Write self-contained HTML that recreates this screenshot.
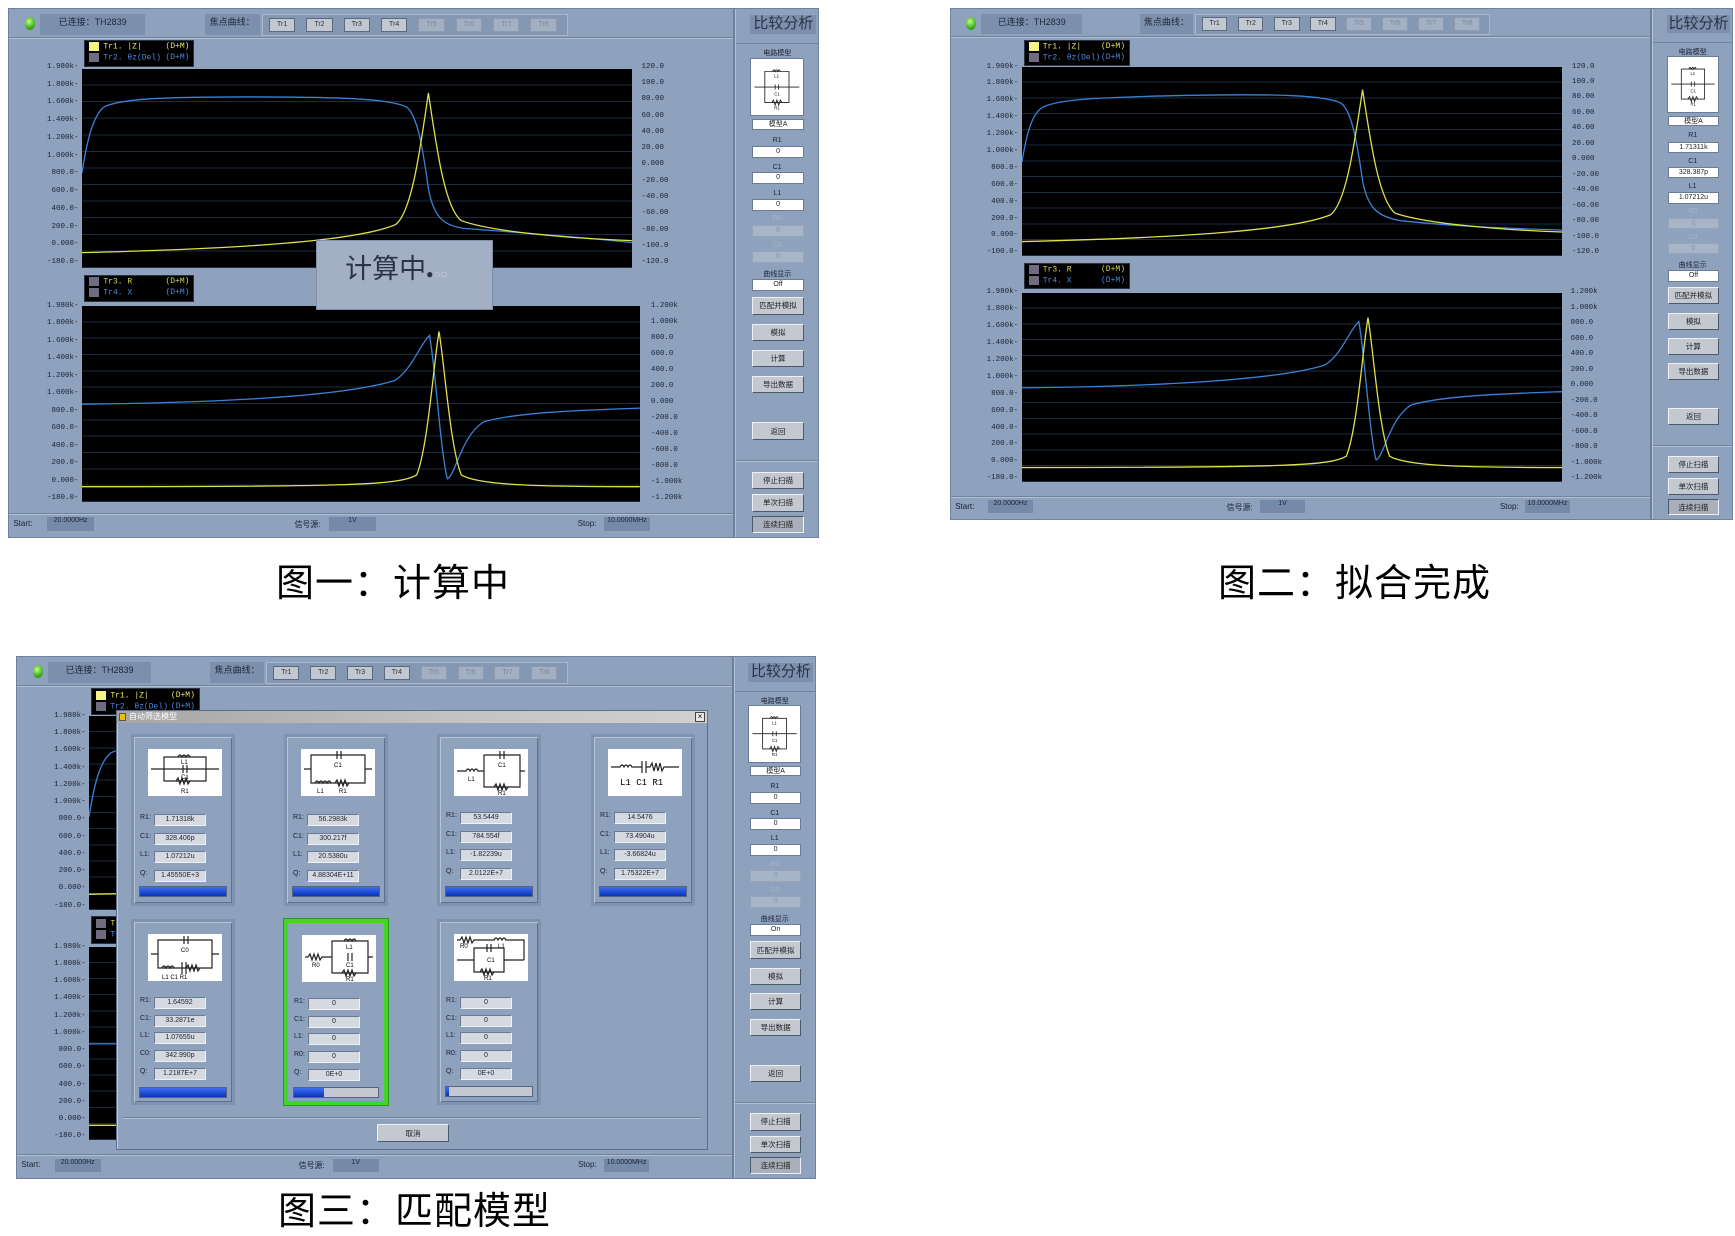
<!DOCTYPE html>
<html><head><meta charset="utf-8">
<style>
*{box-sizing:border-box;margin:0;padding:0}
body{width:1735px;height:1236px;background:#fff;position:relative;overflow:hidden;font-family:"Liberation Sans","Noto Sans CJK SC",sans-serif}
.panel{position:absolute;background:#8ea1bd;border:1px solid #6f819c;overflow:hidden}
.a{position:absolute}
.main{position:absolute;left:0;top:0;width:89.8%;height:100%;border-right:2px solid #6d7f9a}
.side{position:absolute;left:89.8%;right:0;top:0;height:100%;border-left:1px solid #b5c2d6}
.topsep{position:absolute;left:0;width:100%;top:5.3%;height:2px;background:#6f829e;border-bottom:1px solid #b3c0d4}
.botsep{position:absolute;left:0;width:100%;top:95.4%;height:2px;background:#6f829e;border-bottom:1px solid #b3c0d4}
.led{position:absolute;left:2.2%;top:1.6%;width:10px;height:13px;border-radius:50%;background:radial-gradient(circle at 40% 35%,#bfff80,#3cb01c 60%,#2a7a14)}
.dbox{position:absolute;background:#7c8fac;color:#1d2638;font-size:9px;line-height:16px;text-align:center;white-space:nowrap}
.trg{position:absolute;left:34.9%;width:42.2%;top:0.9%;height:4.2%;background:#8497b3;border:1px solid #a9b7cc}
.tr{position:absolute;top:15%;width:8.7%;height:70%;background:#c2c8d2;border:1px solid #5c6a80;font-size:7px;text-align:center;line-height:12px;color:#333}
.tr.d{background:#a3b0c3;color:#7a889c;border-color:#8d9ab0}
.plot{position:absolute;background:#000;background-image:repeating-linear-gradient(to bottom,transparent 0,transparent calc(8.33% - 1px),#1d2c3e calc(8.33% - 1px),#1d2c3e 8.33%)}
.plot svg{position:absolute;left:0;top:0;width:100%;height:100%}
.leg{position:absolute;background:#000;border:1px solid #2a3344;font-size:8px;font-family:"Liberation Mono",monospace}
.leg div{position:absolute;left:4px;right:4px;height:45%;white-space:nowrap}
.leg i{display:inline-block;width:10px;height:9px;vertical-align:middle;margin-right:4px}
.leg b{float:right;font-weight:normal}
.lab{position:absolute;display:flex;flex-direction:column;justify-content:space-between;font-size:7.5px;color:#1a2233;font-family:"Liberation Mono",monospace;white-space:nowrap}
.lab.l{text-align:right}
.st{position:absolute;font-size:8px;color:#1a2233;top:96.6%;white-space:nowrap}
.stb{position:absolute;top:96.3%;height:2.6%;background:#7589a8;font-size:7px;color:#1d2638;text-align:center;white-space:nowrap}
.title{position:absolute;left:17%;right:2%;top:1.2%;height:3.6%;background:#7c8fac;color:#2a3346;font-size:15px;text-align:center;line-height:1.2;white-space:nowrap;overflow:hidden}
.sl{position:absolute;left:0;right:0;text-align:center;font-size:7px;color:#1a2233}
.sl.g{color:#a9b6ca}
.in{position:absolute;left:19%;width:64%;background:#fff;border:1px solid #6c7c96;font-size:7px;text-align:center;color:#222;line-height:10px}
.in.g{background:#a8b5c8;border-color:#97a5ba;color:#8795aa}
.bt{position:absolute;left:19%;width:64%;background:#c3c8d1;border:1px solid;border-color:#eef0f4 #4d586a #4d586a #eef0f4;font-size:7.5px;text-align:center;color:#222;display:flex;align-items:center;justify-content:center}
.ckt{position:absolute;left:17%;width:66%;top:9.3%;height:11%;background:#fff;border:1px solid #6c7c96}
.cap{position:absolute;font-size:38px;color:#000;font-family:"Liberation Sans","Noto Sans CJK SC",sans-serif;white-space:nowrap;letter-spacing:1px}
.card{position:absolute;width:104px;border:3px solid #7f92ae;background:#8ea1bd;box-shadow:inset 1px 1px 0 #b8c4d6,inset -1px -1px 0 #5e7090}
.card .im{position:absolute;left:14px;top:12px;width:74px;height:47px;background:#fff}
.card .f{position:absolute;left:6px;font-size:7px;color:#1a2233;width:90px;height:12px}
.card .f span{position:absolute;left:14px;width:52px;height:12px;background:#d5d9e0;border:1px solid #eef0f4;border-color:#6b7a92 #eef0f4 #eef0f4 #6b7a92;text-align:center;line-height:10px;font-size:7px}
.card .pb{position:absolute;left:5px;right:5px;height:11px;background:#c3c8d1;border:1px solid #55647c}
.card .pb i{position:absolute;left:0;top:0;bottom:0;background:linear-gradient(#3d6df0,#0b35b8)}
.fc{left:27%;top:1%;width:7.6%;height:4%;font-size:9px}
</style></head><body>

<!-- ============ PANEL 1 ============ -->
<div class="panel" style="left:8px;top:8px;width:811px;height:530px">
 <div class="main">
  <div class="led"></div>
  <div class="dbox" style="left:4.3%;top:1%;width:14.5%;height:4%">已连接：TH2839</div>
  <div class="dbox fc">焦点曲线：</div>
  <div class="trg">
   <div class="tr" style="left:2%">Tr1</div><div class="tr" style="left:14.3%">Tr2</div><div class="tr" style="left:26.6%">Tr3</div><div class="tr" style="left:38.9%">Tr4</div>
   <div class="tr d" style="left:51.2%">Tr5</div><div class="tr d" style="left:63.5%">Tr6</div><div class="tr d" style="left:75.8%">Tr7</div><div class="tr d" style="left:88.1%">Tr8</div>
  </div>
  <div class="topsep"></div>
  <div class="leg" style="left:10.4%;top:5.8%;width:15.2%;height:5.2%"><div style="top:5%;color:#e8e860"><i style="background:#f4f480"></i>Tr1. |Z|<b>(D+M)</b></div><div style="top:50%;color:#4a8ae0"><i style="background:#706c80"></i>Tr2. θz(Del)<b>(D+M)</b></div></div>
  <div class="lab l" style="left:0;width:9.6%;top:10.2%;height:38.5%"><span>1.980k-</span><span>1.800k-</span><span>1.600k-</span><span>1.400k-</span><span>1.200k-</span><span>1.000k-</span><span>800.0-</span><span>600.0-</span><span>400.0-</span><span>200.0-</span><span>0.000-</span><span>-180.0-</span></div>
  <div class="plot" style="left:10.1%;top:11.3%;width:75.9%;height:37.8%"><svg viewBox="0 0 100 100" preserveAspectRatio="none">
   <path d="M0,52 C0.8,38 1.8,24 4,19 C7,15 14,14 30,14 C48,14 56,15 59,19 C61,23 62,40 63,60 C64,75 66,79 70,80 C80,82 90,84 100,87" fill="none" stroke="#3a82d8" stroke-width="1.3" vector-effect="non-scaling-stroke"/>
   <path d="M0,92 C30,90 50,86 57,78 C60,72 61.5,40 63,12 C64.5,40 66,70 69,76 C75,82 90,85 100,86" fill="none" stroke="#e0e04a" stroke-width="1.3" vector-effect="non-scaling-stroke"/></svg></div>
  <div class="lab" style="left:87.3%;width:8%;top:10.2%;height:38.5%"><span>120.0</span><span>100.0</span><span>80.00</span><span>60.00</span><span>40.00</span><span>20.00</span><span>0.000</span><span>-20.00</span><span>-40.00</span><span>-60.00</span><span>-80.00</span><span>-100.0</span><span>-120.0</span></div>

  <div class="leg" style="left:10.4%;top:50.3%;width:15.2%;height:5.2%"><div style="top:5%;color:#d8d850"><i style="background:#706c80"></i>Tr3. R<b>(D+M)</b></div><div style="top:50%;color:#4a8ae0"><i style="background:#706c80"></i>Tr4. X<b>(D+M)</b></div></div>
  <div class="lab l" style="left:0;width:9.6%;top:55.4%;height:38%"><span>1.980k-</span><span>1.800k-</span><span>1.600k-</span><span>1.400k-</span><span>1.200k-</span><span>1.000k-</span><span>800.0-</span><span>600.0-</span><span>400.0-</span><span>200.0-</span><span>0.000-</span><span>-180.0-</span></div>
  <div class="plot" style="left:10.1%;top:56.2%;width:77%;height:37.2%"><svg viewBox="0 0 100 100" preserveAspectRatio="none">
   <path d="M0,50 C30,49 48,45 56,38 C59,33 60.5,20 62.3,15 C63.3,30 64.3,75 65.5,88 C67,86 68,66 72,59 C78,54 90,53 100,52" fill="none" stroke="#3a82d8" stroke-width="1.3" vector-effect="non-scaling-stroke"/>
   <path d="M0,92 C50,92 57,91 60,86 C62,72 63,30 64,13 C65,30 66,72 68,86 C71,91 80,92 100,92" fill="none" stroke="#e0e04a" stroke-width="1.3" vector-effect="non-scaling-stroke"/></svg></div>
  <div class="lab" style="left:88.6%;width:8%;top:55.4%;height:38%"><span>1.200k</span><span>1.000k</span><span>800.0</span><span>600.0</span><span>400.0</span><span>200.0</span><span>0.000</span><span>-200.0</span><span>-400.0</span><span>-600.0</span><span>-800.0</span><span>-1.000k</span><span>-1.200k</span></div>

  <div class="a" style="left:42.4%;top:43.8%;width:24.4%;height:13.2%;background:#a2afc4;border:1px solid #8090a8;font-size:27px;color:#2b3346;padding:6px 0 0 28px;white-space:nowrap">计算中<span style="font-size:12px">●<span style="color:#c8d0dc">○○</span></span></div>

  <div class="botsep"></div>
  <div class="st" style="left:0.6%">Start:</div><div class="stb" style="left:5.3%;width:6.4%">20.0000Hz</div>
  <div class="st" style="left:39.4%">信号源:</div><div class="stb" style="left:44.2%;width:6.4%">1V</div>
  <div class="st" style="left:78.5%">Stop:</div><div class="stb" style="left:82.1%;width:6.4%">10.0000MHz</div>
 </div>
 <div class="side">
  <div class="title">比较分析</div>
  <div class="a" style="left:0;right:0;top:6.5%;height:1px;background:#6f829e"></div>
  <div class="sl" style="top:7.4%">电路模型</div>
  <div class="ckt"><svg viewBox="0 0 60 60" width="100%" height="100%"><path d="M4,30H56M16,30V12H44V30M16,30V48H44V30M25,12q1.5,-4 3,0q1.5,-4 3,0q1.5,-4 3,0M28,27V33M32,27V33M24,48l2,-3 2,6 2,-6 2,6 2,-6 2,3" fill="none" stroke="#222" stroke-width="1"/><text x="27" y="19" font-size="5">L1</text><text x="27" y="40" font-size="5">C1</text><text x="27" y="56" font-size="5">R1</text></svg></div>
  <div class="in" style="top:20.9%;height:2%">模型A</div>
  <div class="sl" style="top:24.2%">R1</div><div class="in" style="top:26%;height:2.3%">0</div>
  <div class="sl" style="top:29.3%">C1</div><div class="in" style="top:30.9%;height:2.3%">0</div>
  <div class="sl" style="top:34.2%">L1</div><div class="in" style="top:35.9%;height:2.3%">0</div>
  <div class="sl g" style="top:39.1%">R0</div><div class="in g" style="top:40.9%;height:2.3%">0</div>
  <div class="sl g" style="top:44.1%">C0</div><div class="in g" style="top:45.8%;height:2.3%">0</div>
  <div class="sl" style="top:49.3%">曲线显示</div><div class="in" style="top:51.2%;height:2.3%">Off</div>
  <div class="bt" style="top:54.6%;height:3.3%">匹配并模拟</div>
  <div class="bt" style="top:59.6%;height:3.3%">模拟</div>
  <div class="bt" style="top:64.5%;height:3.3%">计算</div>
  <div class="bt" style="top:69.5%;height:3.3%">导出数据</div>
  <div class="bt" style="top:78.3%;height:3.3%">返回</div>
  <div class="a" style="left:0;right:0;top:85.5%;height:2px;background:#6f829e;border-bottom:1px solid #b3c0d4"></div>
  <div class="bt" style="top:87.6%;height:3.3%">停止扫描</div>
  <div class="bt" style="top:91.9%;height:3.3%">单次扫描</div>
  <div class="bt" style="top:96%;height:3.3%;background:#a9b0bc;border-color:#4d586a #eef0f4 #eef0f4 #4d586a">连续扫描</div>
 </div>
</div>
<div class="cap" style="left:276px;top:552px">图一：计算中</div>

<!-- ============ PANEL 2 ============ -->
<div class="panel" style="left:950px;top:8px;width:783px;height:512px">
 <div class="main">
  <div class="led"></div>
  <div class="dbox" style="left:4.3%;top:1%;width:14.5%;height:4%">已连接：TH2839</div>
  <div class="dbox fc">焦点曲线：</div>
  <div class="trg">
   <div class="tr" style="left:2%">Tr1</div><div class="tr" style="left:14.3%">Tr2</div><div class="tr" style="left:26.6%">Tr3</div><div class="tr" style="left:38.9%">Tr4</div>
   <div class="tr d" style="left:51.2%">Tr5</div><div class="tr d" style="left:63.5%">Tr6</div><div class="tr d" style="left:75.8%">Tr7</div><div class="tr d" style="left:88.1%">Tr8</div>
  </div>
  <div class="topsep"></div>
  <div class="leg" style="left:10.4%;top:6%;width:15.2%;height:5.2%"><div style="top:5%;color:#e8e860"><i style="background:#f4f480"></i>Tr1. |Z|<b>(D+M)</b></div><div style="top:50%;color:#4a8ae0"><i style="background:#706c80"></i>Tr2. θz(Del)<b>(D+M)</b></div></div>
  <div class="lab l" style="left:0;width:9.6%;top:10.5%;height:38%"><span>1.900k-</span><span>1.800k-</span><span>1.600k-</span><span>1.400k-</span><span>1.200k-</span><span>1.000k-</span><span>800.0-</span><span>600.0-</span><span>400.0-</span><span>200.0-</span><span>0.000-</span><span>-100.0-</span></div>
  <div class="plot" style="left:10.1%;top:11.3%;width:77.3%;height:37.2%"><svg viewBox="0 0 100 100" preserveAspectRatio="none">
   <path d="M0,50 C0.8,36 1.8,24 4,21 C7,17 14,16 30,15 C48,14 56,15 59,19 C61,23 62,40 63,60 C64,75 66,79 70,81 C80,84 90,85 100,86" fill="none" stroke="#3a82d8" stroke-width="1.3" vector-effect="non-scaling-stroke"/>
   <path d="M0,92 C30,90 50,86 57,78 C60,72 61.5,40 63,12 C64.5,40 66,70 69,77 C75,83 90,86 100,87" fill="none" stroke="#e0e04a" stroke-width="1.3" vector-effect="non-scaling-stroke"/></svg></div>
  <div class="lab" style="left:88.8%;width:8%;top:10.5%;height:38%"><span>120.0</span><span>100.0</span><span>80.00</span><span>60.00</span><span>40.00</span><span>20.00</span><span>0.000</span><span>-20.00</span><span>-40.00</span><span>-60.00</span><span>-80.00</span><span>-100.0</span><span>-120.0</span></div>

  <div class="leg" style="left:10.4%;top:49.8%;width:15.2%;height:5.2%"><div style="top:5%;color:#d8d850"><i style="background:#706c80"></i>Tr3. R<b>(D+M)</b></div><div style="top:50%;color:#4a8ae0"><i style="background:#706c80"></i>Tr4. X<b>(D+M)</b></div></div>
  <div class="lab l" style="left:0;width:9.6%;top:54.8%;height:38%"><span>1.980k-</span><span>1.800k-</span><span>1.600k-</span><span>1.400k-</span><span>1.200k-</span><span>1.000k-</span><span>800.0-</span><span>600.0-</span><span>400.0-</span><span>200.0-</span><span>0.000-</span><span>-180.0-</span></div>
  <div class="plot" style="left:10.1%;top:55.6%;width:77.3%;height:37.2%"><svg viewBox="0 0 100 100" preserveAspectRatio="none">
   <path d="M0,50 C30,49 48,45 56,38 C59,33 60.5,20 62.3,15 C63.3,30 64.3,75 65.5,88 C67,86 68,66 72,59 C78,54 90,53 100,52" fill="none" stroke="#3a82d8" stroke-width="1.3" vector-effect="non-scaling-stroke"/>
   <path d="M0,92 C50,92 57,91 60,86 C62,72 63,30 64,13 C65,30 66,72 68,86 C71,91 80,92 100,92" fill="none" stroke="#e0e04a" stroke-width="1.3" vector-effect="non-scaling-stroke"/></svg></div>
  <div class="lab" style="left:88.6%;width:8%;top:54.8%;height:38%"><span>1.200k</span><span>1.000k</span><span>800.0</span><span>600.0</span><span>400.0</span><span>200.0</span><span>0.000</span><span>-200.0</span><span>-400.0</span><span>-600.0</span><span>-800.0</span><span>-1.000k</span><span>-1.200k</span></div>

  <div class="botsep"></div>
  <div class="st" style="left:0.6%">Start:</div><div class="stb" style="left:5.3%;width:6.4%">20.0000Hz</div>
  <div class="st" style="left:39.4%">信号源:</div><div class="stb" style="left:44.2%;width:6.4%">1V</div>
  <div class="st" style="left:78.5%">Stop:</div><div class="stb" style="left:82.1%;width:6.4%">10.0000MHz</div>
 </div>
 <div class="side">
  <div class="title">比较分析</div>
  <div class="a" style="left:0;right:0;top:6.5%;height:1px;background:#6f829e"></div>
  <div class="sl" style="top:7.4%">电路模型</div>
  <div class="ckt"><svg viewBox="0 0 60 60" width="100%" height="100%"><path d="M4,30H56M16,30V12H44V30M16,30V48H44V30M25,12q1.5,-4 3,0q1.5,-4 3,0q1.5,-4 3,0M28,27V33M32,27V33M24,48l2,-3 2,6 2,-6 2,6 2,-6 2,3" fill="none" stroke="#222" stroke-width="1"/><text x="27" y="19" font-size="5">L1</text><text x="27" y="40" font-size="5">C1</text><text x="27" y="56" font-size="5">R1</text></svg></div>
  <div class="in" style="top:20.9%;height:2%">模型A</div>
  <div class="sl" style="top:24.2%">R1</div><div class="in" style="top:26%;height:2.3%">1.71311k</div>
  <div class="sl" style="top:29.3%">C1</div><div class="in" style="top:30.9%;height:2.3%">328.387p</div>
  <div class="sl" style="top:34.2%">L1</div><div class="in" style="top:35.9%;height:2.3%">1.07212u</div>
  <div class="sl g" style="top:39.1%">R0</div><div class="in g" style="top:40.9%;height:2.3%">0</div>
  <div class="sl g" style="top:44.1%">C0</div><div class="in g" style="top:45.8%;height:2.3%">0</div>
  <div class="sl" style="top:49.3%">曲线显示</div><div class="in" style="top:51.2%;height:2.3%">Off</div>
  <div class="bt" style="top:54.6%;height:3.3%">匹配并模拟</div>
  <div class="bt" style="top:59.6%;height:3.3%">模拟</div>
  <div class="bt" style="top:64.5%;height:3.3%">计算</div>
  <div class="bt" style="top:69.5%;height:3.3%">导出数据</div>
  <div class="bt" style="top:78.3%;height:3.3%">返回</div>
  <div class="a" style="left:0;right:0;top:85.5%;height:2px;background:#6f829e;border-bottom:1px solid #b3c0d4"></div>
  <div class="bt" style="top:87.6%;height:3.3%">停止扫描</div>
  <div class="bt" style="top:91.9%;height:3.3%">单次扫描</div>
  <div class="bt" style="top:96%;height:3.3%;background:#a9b0bc;border-color:#4d586a #eef0f4 #eef0f4 #4d586a">连续扫描</div>
 </div>
</div>
<div class="cap" style="left:1218px;top:552px">图二：拟合完成</div>

<!-- ============ PANEL 3 ============ -->
<div class="panel" style="left:16px;top:656px;width:800px;height:523px">
 <div class="main">
  <div class="led"></div>
  <div class="dbox" style="left:4.3%;top:1%;width:14.5%;height:4%">已连接：TH2839</div>
  <div class="dbox fc">焦点曲线：</div>
  <div class="trg">
   <div class="tr" style="left:2%">Tr1</div><div class="tr" style="left:14.3%">Tr2</div><div class="tr" style="left:26.6%">Tr3</div><div class="tr" style="left:38.9%">Tr4</div>
   <div class="tr d" style="left:51.2%">Tr5</div><div class="tr d" style="left:63.5%">Tr6</div><div class="tr d" style="left:75.8%">Tr7</div><div class="tr d" style="left:88.1%">Tr8</div>
  </div>
  <div class="topsep"></div>
  <div class="leg" style="left:10.4%;top:6%;width:15.2%;height:5.2%"><div style="top:5%;color:#e8e860"><i style="background:#f4f480"></i>Tr1. |Z|<b>(D+M)</b></div><div style="top:50%;color:#4a8ae0"><i style="background:#706c80"></i>Tr2. θz(Del)<b>(D+M)</b></div></div>
  <div class="lab l" style="left:0;width:9.6%;top:10.5%;height:38%"><span>1.980k-</span><span>1.800k-</span><span>1.600k-</span><span>1.400k-</span><span>1.200k-</span><span>1.000k-</span><span>800.0-</span><span>600.0-</span><span>400.0-</span><span>200.0-</span><span>0.000-</span><span>-180.0-</span></div>
  <div class="plot" style="left:10.1%;top:11.3%;width:76%;height:37.2%"><svg viewBox="0 0 100 100" preserveAspectRatio="none">
   <path d="M0,52 C0.8,38 1.8,24 4,19 C7,15 14,14 30,14" fill="none" stroke="#3a82d8" stroke-width="1.3" vector-effect="non-scaling-stroke"/>
   <path d="M0,92 C10,91.5 20,91 30,90" fill="none" stroke="#e0e04a" stroke-width="1.3" vector-effect="non-scaling-stroke"/></svg></div>
  <div class="leg" style="left:10.4%;top:49.8%;width:15.2%;height:5.2%"><div style="top:5%;color:#d8d850"><i style="background:#706c80"></i>Tr3. R<b>(D+M)</b></div><div style="top:50%;color:#4a8ae0"><i style="background:#706c80"></i>Tr4. X<b>(D+M)</b></div></div>
  <div class="lab l" style="left:0;width:9.6%;top:54.8%;height:38%"><span>1.980k-</span><span>1.800k-</span><span>1.600k-</span><span>1.400k-</span><span>1.200k-</span><span>1.000k-</span><span>800.0-</span><span>600.0-</span><span>400.0-</span><span>200.0-</span><span>0.000-</span><span>-180.0-</span></div>
  <div class="plot" style="left:10.1%;top:55.6%;width:77%;height:37.2%"><svg viewBox="0 0 100 100" preserveAspectRatio="none">
   <path d="M0,50 C10,50 20,49.5 30,49" fill="none" stroke="#3a82d8" stroke-width="1.3" vector-effect="non-scaling-stroke"/>
   <path d="M0,92 L30,92" fill="none" stroke="#e0e04a" stroke-width="1.3" vector-effect="non-scaling-stroke"/></svg></div>
  <div class="botsep"></div>
  <div class="st" style="left:0.6%">Start:</div><div class="stb" style="left:5.3%;width:6.4%">20.0000Hz</div>
  <div class="st" style="left:39.4%">信号源:</div><div class="stb" style="left:44.2%;width:6.4%">1V</div>
  <div class="st" style="left:78.5%">Stop:</div><div class="stb" style="left:82.1%;width:6.4%">10.0000MHz</div>

  <!-- dialog -->
  <div class="a" style="left:99px;top:53px;width:592px;height:440px;background:#8ea1bd;border:1px solid #5d6e88;box-shadow:inset 1px 1px 0 #c0cadb">
   <div class="a" style="left:0;top:0;right:0;height:12px;background:linear-gradient(to right,#a6a6a6,#c4c4c4 60%,#d0d0d0);font-size:8px;color:#fff;line-height:12px;padding-left:12px">自动筛选模型
    <span class="a" style="left:2px;top:2px;width:7px;height:8px;background:#e8c000;border:1px solid #555"></span>
    <span class="a" style="right:2px;top:1px;width:10px;height:10px;background:#e8e8e8;border:1px solid #444;color:#000;font-size:8px;line-height:8px;text-align:center">×</span></div>

   <div class="card" style="left:14px;top:23px;height:172px">
    <div class="im"><svg viewBox="0 0 74 47" width="74" height="47"><path d="M3,20H71M16,20V8H58V20M16,20V32H58V20M30,8q2,-4 4,0q2,-4 4,0q2,-4 4,0M35,16V24M39,16V24M28,32l2,-3 2,6 2,-6 2,6 2,-6 2,6 2,-3" fill="none" stroke="#222" stroke-width="1.2"/><text x="33" y="15" font-size="6">L1</text><text x="33" y="30" font-size="6">C1</text><text x="33" y="44" font-size="6">R1</text></svg></div>
    <div class="f" style="top:77px">R1:<span>1.71318k</span></div>
    <div class="f" style="top:96px">C1:<span>328.406p</span></div>
    <div class="f" style="top:114px">L1:<span>1.07212u</span></div>
    <div class="f" style="top:133px">Q:<span>1.45550E+3</span></div>
    <div class="pb" style="top:149px"><i style="right:0"></i></div>
   </div>
   <div class="card" style="left:167px;top:23px;height:172px">
    <div class="im"><svg viewBox="0 0 74 47" width="74" height="47"><path d="M3,20H10M64,20H71M10,20V6H64V20M10,20V34H64V20M36,2V10M40,2V10M14,34q2,-4 4,0q2,-4 4,0q2,-4 4,0q2,-4 4,0M34,34l2,-3 2,6 2,-6 2,6 2,-6 2,6 2,-3" fill="none" stroke="#222" stroke-width="1.2"/><text x="33" y="18" font-size="6">C1</text><text x="16" y="44" font-size="6">L1</text><text x="38" y="44" font-size="6">R1</text></svg></div>
    <div class="f" style="top:77px">R1:<span>56.2983k</span></div>
    <div class="f" style="top:96px">C1:<span>300.217f</span></div>
    <div class="f" style="top:114px">L1:<span>20.5380u</span></div>
    <div class="f" style="top:133px">Q:<span>4.88304E+11</span></div>
    <div class="pb" style="top:149px"><i style="right:0"></i></div>
   </div>
   <div class="card" style="left:320px;top:23px;height:172px">
    <div class="im"><svg viewBox="0 0 74 47" width="74" height="47"><path d="M3,22H12q2,-4 4,0q2,-4 4,0q2,-4 4,0H30M30,22V6H66V22M30,22V38H66V22M66,22H71M46,2V10M50,2V10M40,38l2,-3 2,6 2,-6 2,6 2,-6 2,6 2,-3" fill="none" stroke="#222" stroke-width="1.2"/><text x="44" y="18" font-size="6">C1</text><text x="14" y="32" font-size="6">L1</text><text x="44" y="46" font-size="6">R1</text></svg></div>
    <div class="f" style="top:75px">R1:<span>53.5449</span></div>
    <div class="f" style="top:94px">C1:<span>784.554f</span></div>
    <div class="f" style="top:112px">L1:<span>-1.82239u</span></div>
    <div class="f" style="top:131px">Q:<span>2.0122E+7</span></div>
    <div class="pb" style="top:149px"><i style="right:0"></i></div>
   </div>
   <div class="card" style="left:474px;top:23px;height:172px">
    <div class="im"><svg viewBox="0 0 74 47" width="74" height="47"><path d="M3,18H12q2,-4 4,0q2,-4 4,0q2,-4 4,0H34M34,12V24M38,12V24M38,18H42l2,-4 2,8 2,-8 2,8 2,-8 2,8 2,-4H71" fill="none" stroke="#222" stroke-width="1.2"/><text x="12" y="36" font-size="9" font-family="Liberation Mono">L1 C1 R1</text></svg></div>
    <div class="f" style="top:75px">R1:<span>14.5476</span></div>
    <div class="f" style="top:94px">C1:<span>73.4904u</span></div>
    <div class="f" style="top:112px">L1:<span>-3.66824u</span></div>
    <div class="f" style="top:131px">Q:<span>1.75322E+7</span></div>
    <div class="pb" style="top:149px"><i style="right:0"></i></div>
   </div>

   <div class="card" style="left:14px;top:208px;height:186px">
    <div class="im"><svg viewBox="0 0 74 47" width="74" height="47"><path d="M3,20H10M64,20H71M10,20V6H64V20M10,20V34H64V20M36,2V10M40,2V10M14,34q2,-4 4,0q2,-4 4,0q2,-4 4,0H34M34,28V40M38,28V40M38,34l2,-3 2,6 2,-6 2,6 2,-6 2,6 2,-3" fill="none" stroke="#222" stroke-width="1.2"/><text x="33" y="18" font-size="6">C0</text><text x="14" y="45" font-size="6">L1 C1 R1</text></svg></div>
    <div class="f" style="top:75px">R1:<span>1.64592</span></div>
    <div class="f" style="top:93px">C1:<span>33.2871e</span></div>
    <div class="f" style="top:110px">L1:<span>1.07655u</span></div>
    <div class="f" style="top:128px">C0:<span>342.990p</span></div>
    <div class="f" style="top:146px">Q:<span>1.2187E+7</span></div>
    <div class="pb" style="top:165px"><i style="right:0"></i></div>
   </div>
   <div class="card" style="left:167px;top:208px;height:186px;border:4px solid #43d42a;box-shadow:0 0 0 1px #2a9a1a">
    <div class="im"><svg viewBox="0 0 74 47" width="74" height="47"><path d="M3,22H6l2,-3 2,6 2,-6 2,6 2,-6 2,6 2,-3H30M30,22V6H66V22M30,22V38H66V22M66,22H71M42,6q2,-4 4,0q2,-4 4,0q2,-4 4,0M46,18V26M50,18V26M40,38l2,-3 2,6 2,-6 2,6 2,-6 2,6 2,-3" fill="none" stroke="#222" stroke-width="1.2"/><text x="44" y="14" font-size="6">L1</text><text x="44" y="32" font-size="6">C1</text><text x="10" y="32" font-size="6">R0</text><text x="44" y="46" font-size="6">R1</text></svg></div>
    <div class="f" style="top:75px">R1:<span>0</span></div>
    <div class="f" style="top:93px">C1:<span>0</span></div>
    <div class="f" style="top:110px">L1:<span>0</span></div>
    <div class="f" style="top:128px">R0:<span>0</span></div>
    <div class="f" style="top:146px">Q:<span>0E+0</span></div>
    <div class="pb" style="top:164px"><i style="width:36%"></i></div>
   </div>
   <div class="card" style="left:320px;top:208px;height:186px">
    <div class="im"><svg viewBox="0 0 74 47" width="74" height="47"><path d="M3,6H6l2,-3 2,6 2,-6 2,6 2,-6 2,6 2,-3H40q2,-4 4,0q2,-4 4,0q2,-4 4,0H70V26M3,26H20M20,26V14H50V26M20,26V38H50V26M50,26H70M33,10V18M37,10V18M26,38l2,-3 2,6 2,-6 2,6 2,-6 2,6 2,-3" fill="none" stroke="#222" stroke-width="1.2"/><text x="6" y="14" font-size="6">R0</text><text x="44" y="14" font-size="6">L1</text><text x="33" y="28" font-size="6">C1</text><text x="30" y="46" font-size="6">R1</text></svg></div>
    <div class="f" style="top:75px">R1:<span>0</span></div>
    <div class="f" style="top:93px">C1:<span>0</span></div>
    <div class="f" style="top:110px">L1:<span>0</span></div>
    <div class="f" style="top:128px">R0:<span>0</span></div>
    <div class="f" style="top:146px">Q:<span>0E+0</span></div>
    <div class="pb" style="top:164px"><i style="width:3px"></i></div>
   </div>

   <div class="a" style="left:6px;right:6px;top:406px;height:2px;background:#6f829e;border-bottom:1px solid #b3c0d4"></div>
   <div class="bt" style="left:260px;width:72px;top:413px;height:18px">取消</div>
  </div>
 </div>
 <div class="side">
  <div class="title">比较分析</div>
  <div class="a" style="left:0;right:0;top:6.5%;height:1px;background:#6f829e"></div>
  <div class="sl" style="top:7.4%">电路模型</div>
  <div class="ckt"><svg viewBox="0 0 60 60" width="100%" height="100%"><path d="M4,30H56M16,30V12H44V30M16,30V48H44V30M25,12q1.5,-4 3,0q1.5,-4 3,0q1.5,-4 3,0M28,27V33M32,27V33M24,48l2,-3 2,6 2,-6 2,6 2,-6 2,3" fill="none" stroke="#222" stroke-width="1"/><text x="27" y="19" font-size="5">L1</text><text x="27" y="40" font-size="5">C1</text><text x="27" y="56" font-size="5">R1</text></svg></div>
  <div class="in" style="top:20.9%;height:2%">模型A</div>
  <div class="sl" style="top:24.2%">R1</div><div class="in" style="top:26%;height:2.3%">0</div>
  <div class="sl" style="top:29.3%">C1</div><div class="in" style="top:30.9%;height:2.3%">0</div>
  <div class="sl" style="top:34.2%">L1</div><div class="in" style="top:35.9%;height:2.3%">0</div>
  <div class="sl g" style="top:39.1%">R0</div><div class="in g" style="top:40.9%;height:2.3%">0</div>
  <div class="sl g" style="top:44.1%">C0</div><div class="in g" style="top:45.8%;height:2.3%">0</div>
  <div class="sl" style="top:49.3%">曲线显示</div><div class="in" style="top:51.2%;height:2.3%">On</div>
  <div class="bt" style="top:54.6%;height:3.3%">匹配并模拟</div>
  <div class="bt" style="top:59.6%;height:3.3%">模拟</div>
  <div class="bt" style="top:64.5%;height:3.3%">计算</div>
  <div class="bt" style="top:69.5%;height:3.3%">导出数据</div>
  <div class="bt" style="top:78.3%;height:3.3%">返回</div>
  <div class="a" style="left:0;right:0;top:85.5%;height:2px;background:#6f829e;border-bottom:1px solid #b3c0d4"></div>
  <div class="bt" style="top:87.6%;height:3.3%">停止扫描</div>
  <div class="bt" style="top:91.9%;height:3.3%">单次扫描</div>
  <div class="bt" style="top:96%;height:3.3%;background:#a9b0bc;border-color:#4d586a #eef0f4 #eef0f4 #4d586a">连续扫描</div>
 </div>
</div>
<div class="cap" style="left:278px;top:1180px">图三：匹配模型</div>

</body></html>
